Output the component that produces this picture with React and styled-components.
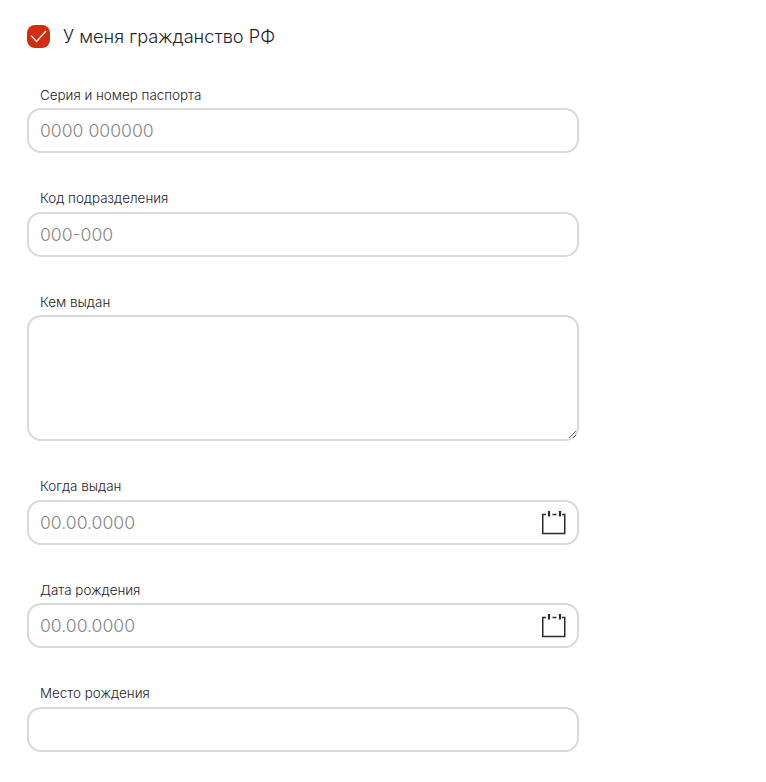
import React from "react";
import styled, { createGlobalStyle } from "styled-components";

const GlobalStyle = createGlobalStyle`
  html, body {
    margin: 0;
    padding: 0;
    background: #fff;
    font-family: Inter, "Liberation Sans", sans-serif;
  }
`;

const Form = styled.form`
  width: 552px;
  padding: 25px 0 0 27px;
  display: flex;
  flex-direction: column;
`;

const CheckRow = styled.label`
  display: flex;
  align-items: center;
  gap: 13px;
  height: 22px;
  margin-bottom: 39.7px;
  font-size: 18.2px;
  font-weight: 350;
  color: #1f2229;
`;

const CheckBox = styled.span`
  width: 23px;
  height: 23px;
  border-radius: 8px;
  background: #d22d0f;
  display: flex;
  align-items: center;
  justify-content: center;
`;

const Field = styled.div`
  display: flex;
  flex-direction: column;
  margin-bottom: 37.05px;
`;

const Label = styled.label`
  font-size: 13.4px;
  font-weight: 350;
  line-height: 17px;
  color: #1f2229;
  margin: 0 0 4.4px 13px;
`;

const InputWrap = styled.div`
  position: relative;
`;

const Input = styled.input`
  display: block;
  box-sizing: border-box;
  width: 100%;
  height: 45px;
  padding: 0 11px;
  border: 2px solid #d9d9d9;
  border-radius: 14px;
  outline: none;
  background: #fff;
  font-family: inherit;
  font-size: 17.6px;
  font-weight: 300;
  color: #26282e;

  &::placeholder {
    color: #858585;
    opacity: 1;
  }
`;

const TextArea = styled.textarea`
  display: block;
  box-sizing: border-box;
  width: 100%;
  height: 126.4px;
  padding: 10px 11px;
  border: 2px solid #d9d9d9;
  border-radius: 14px;
  outline: none;
  background: #fff;
  font-family: inherit;
  font-size: 17px;
`;

const CalendarIcon = styled.svg`
  position: absolute;
  top: 10px;
  right: 13px;
`;

const Calendar = () => (
  <CalendarIcon width="25" height="25" viewBox="0 0 25 25" fill="none" stroke="#2b2b2b">
    <path d="M5 4.5H1.75V23.5H23.75V4.5H21" strokeWidth="1.5" />
    <path d="M11.5 4.5H15.5" strokeWidth="1.5" />
    <path d="M8 1V6.5M19 1V6.5" strokeWidth="2.2" />
  </CalendarIcon>
);

const App = () => (
  <>
    <GlobalStyle />
    <Form>
      <CheckRow>
        <CheckBox>
          <svg width="17" height="13" viewBox="0 0 17 13" fill="none">
            <path d="M1 5.5L6.5 11.5L16 1" stroke="#fff" strokeWidth="1.3" />
          </svg>
        </CheckBox>
        У меня гражданство РФ
      </CheckRow>
      <Field>
        <Label>Серия и номер паспорта</Label>
        <Input placeholder="0000 000000" />
      </Field>
      <Field>
        <Label>Код подразделения</Label>
        <Input placeholder="000-000" />
      </Field>
      <Field>
        <Label>Кем выдан</Label>
        <TextArea />
      </Field>
      <Field>
        <Label>Когда выдан</Label>
        <InputWrap>
          <Input placeholder="00.00.0000" />
          <Calendar />
        </InputWrap>
      </Field>
      <Field>
        <Label>Дата рождения</Label>
        <InputWrap>
          <Input placeholder="00.00.0000" />
          <Calendar />
        </InputWrap>
      </Field>
      <Field>
        <Label>Место рождения</Label>
        <Input />
      </Field>
    </Form>
  </>
);

export default App;
